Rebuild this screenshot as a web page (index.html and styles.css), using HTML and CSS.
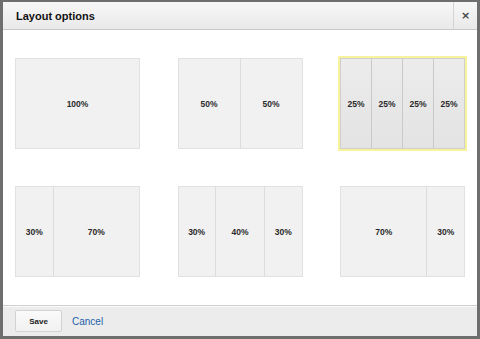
FILE: index.html
```html
<!DOCTYPE html>
<html lang="en">
<head>
    <meta charset="UTF-8">
    <title>Layout options</title>
    <link rel="stylesheet" href="styles.css">
</head>
<body>

<div class="dialog">
    <header class="dialog-header">
        <h1>Layout options</h1>
        <button class="close-btn" type="button">&times;</button>
    </header>

    <section class="layout-grid">
        <div class="layout-card">
            <div class="col" style="flex: 100">100%</div>
        </div>
        <div class="layout-card">
            <div class="col" style="flex: 50">50%</div>
            <div class="col" style="flex: 50">50%</div>
        </div>
        <div class="layout-card selected">
            <div class="col" style="flex: 25">25%</div>
            <div class="col" style="flex: 25">25%</div>
            <div class="col" style="flex: 25">25%</div>
            <div class="col" style="flex: 25">25%</div>
        </div>
        <div class="layout-card">
            <div class="col" style="flex: 30">30%</div>
            <div class="col" style="flex: 70">70%</div>
        </div>
        <div class="layout-card">
            <div class="col" style="flex: 30">30%</div>
            <div class="col" style="flex: 40">40%</div>
            <div class="col" style="flex: 30">30%</div>
        </div>
        <div class="layout-card">
            <div class="col" style="flex: 70">70%</div>
            <div class="col" style="flex: 30">30%</div>
        </div>
    </section>

    <footer class="dialog-footer">
        <button class="save-btn" type="button">Save</button>
        <a class="cancel-link" href="#">Cancel</a>
    </footer>
</div>

</body>
</html>
```

FILE: styles.css
```css
html, body {
    margin: 0;
    padding: 0;
    background-color: #6b6b6b;
}
body {
    font-family: "Liberation Sans", Arial, sans-serif;
    width: 480px;
    height: 339px;
    overflow: hidden;
}
.dialog {
    box-sizing: border-box;
    width: 480px;
    height: 339px;
    border-style: solid;
    border-color: #6e6e6e;
    border-width: 2px 3px 3px 3px;
    background-color: white;
    display: flex;
    flex-direction: column;
}
.dialog-header {
    height: 27px;
    display: flex;
    align-items: stretch;
    background: linear-gradient(#f7f7f7, #e9e9e9);
    border-bottom: 1px solid #c9c9c9;
}
.dialog-header h1 {
    flex: 1;
    margin: 0;
    padding-left: 13px;
    font-size: 11px;
    font-weight: bold;
    line-height: 28px;
    color: #111;
}
.close-btn {
    width: 24px;
    border: 0;
    border-left: 1px solid #d4d4d4;
    background: transparent;
    font-family: "DejaVu Sans", sans-serif;
    font-size: 11px;
    font-weight: bold;
    color: #444;
    padding: 0;
    line-height: 27px;
}
.layout-grid {
    flex: 1;
    display: grid;
    grid-template-columns: repeat(3, 125px);
    grid-template-rows: 91px 91px;
    column-gap: 37.5px;
    row-gap: 37px;
    padding: 28px 11px 0 12px;
}
.layout-card {
    display: flex;
    border: 1px solid #e1e1e1;
    background-color: #f1f1f1;
}
.layout-card .col {
    display: flex;
    align-items: center;
    justify-content: center;
    font-size: 8.5px;
    font-weight: bold;
    color: #2a2a2a;
    border-left: 1px solid #dcdcdc;
    min-width: 0;
}
.layout-card .col:first-child {
    border-left: 0;
}
.layout-card.selected {
    border-color: #cfcfcf;
    background: linear-gradient(#ececec, #e3e3e3);
    box-shadow: 0 0 0 2px #f6f39a;
}
.layout-card.selected .col {
    border-left-color: #c9c9c9;
}
.dialog-footer {
    height: 30px;
    display: flex;
    align-items: center;
    gap: 10px;
    padding-left: 12px;
    background-color: #ececec;
    border-top: 1px solid #cfcfcf;
    box-shadow: inset 0 1px 0 #fafafa;
}
.save-btn {
    width: 47px;
    height: 22px;
    border: 1px solid #d2d2d2;
    border-radius: 2px;
    background: linear-gradient(#fafafa, #f1f1f1);
    font-family: "Liberation Sans", Arial, sans-serif;
    font-size: 8px;
    font-weight: bold;
    color: #222;
    padding: 0;
}
.cancel-link {
    font-size: 10px;
    color: #1d5fa8;
    text-decoration: none;
}
```
